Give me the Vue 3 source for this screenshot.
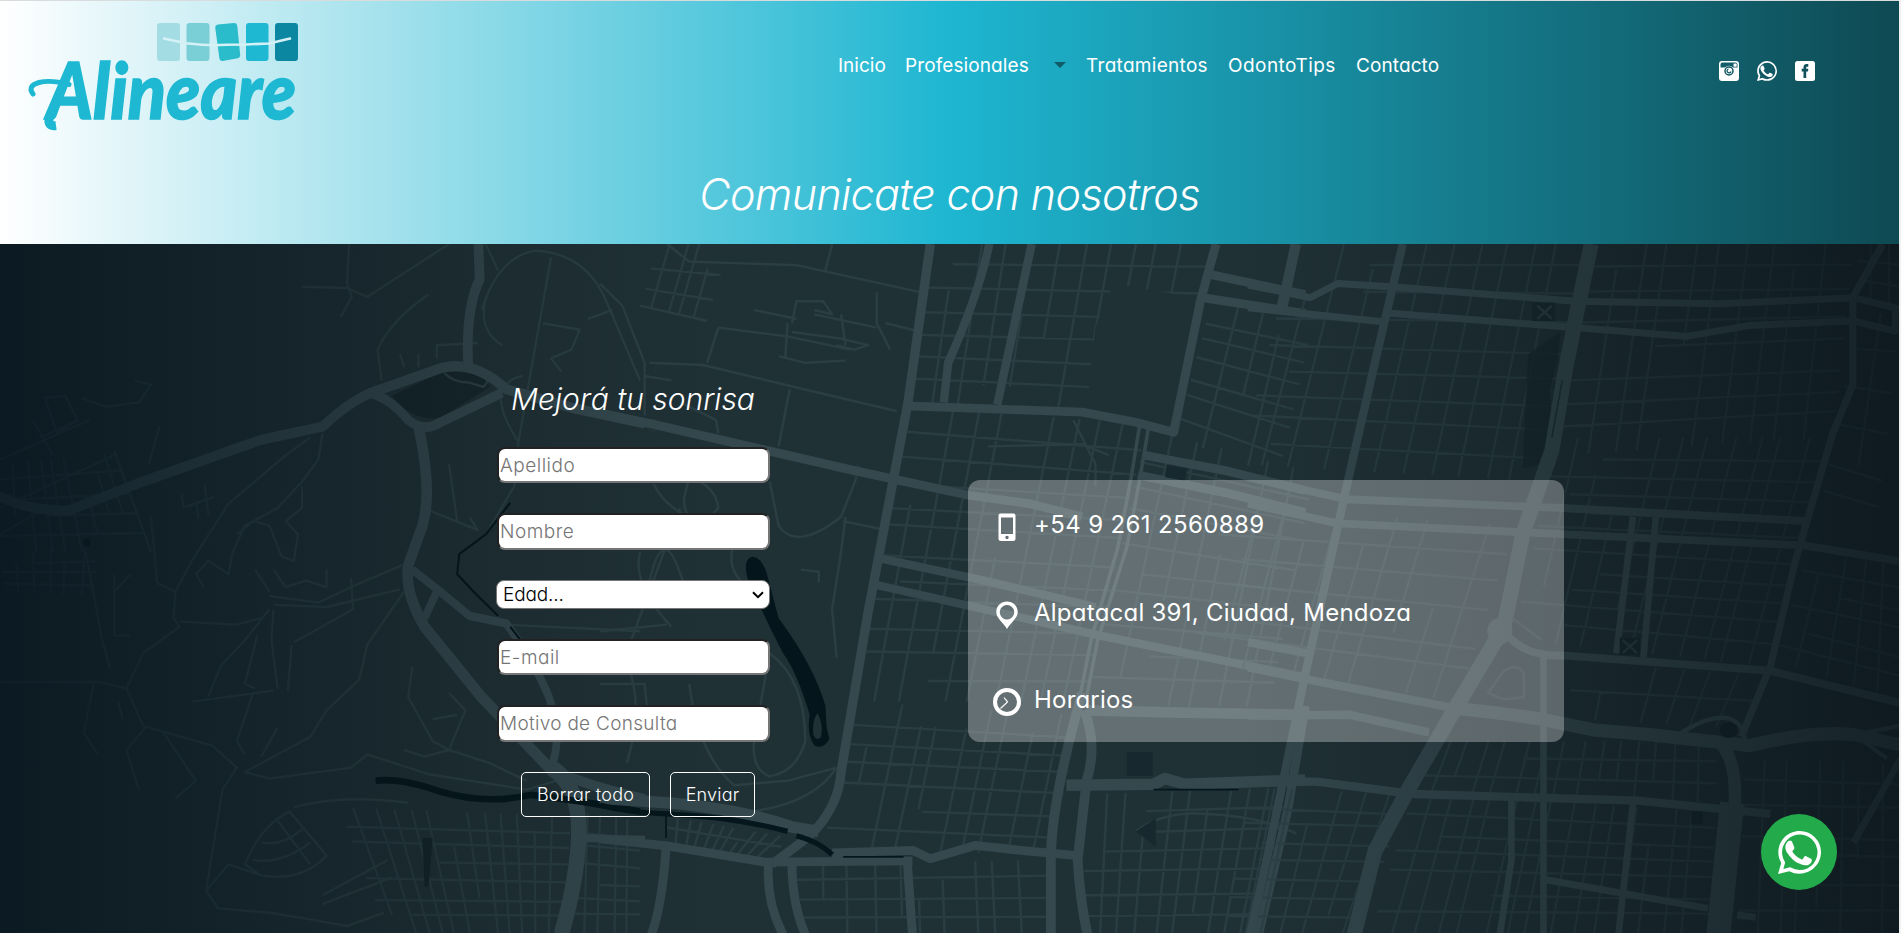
<script setup>
const links = [
  { label: 'Inicio', cls: 'l-inicio' },
  { label: 'Profesionales', cls: 'l-prof', caret: true },
  { label: 'Tratamientos', cls: 'l-trat' },
  { label: 'OdontoTips', cls: 'l-odon' },
  { label: 'Contacto', cls: 'l-cont' },
]

// Street blocks: bilinear grid of slightly irregular lines inside a quad.
let seed = 7
const rnd = () => {
  seed = (seed * 16807) % 2147483647
  return seed / 2147483647
}
function grid(q, nu, nv) {
  const at = (u, v) =>
    [0, 1]
      .map((k) => (1 - v) * ((1 - u) * q[0][k] + u * q[1][k]) + v * ((1 - u) * q[3][k] + u * q[2][k]))
      .map((n) => n.toFixed(1))
      .join(' ')
  let d = ''
  for (let i = 1; i < nu; i++) {
    const u = (i + (rnd() - 0.5) * 0.4) / nu
    const a = rnd() < 0.3 ? Math.round(rnd() * nv * 0.5) / nv : 0
    const b = rnd() < 0.3 ? 1 - Math.round(rnd() * nv * 0.5) / nv : 1
    d += `M${at(u, a)}L${at(u, b)}`
  }
  for (let j = 1; j < nv; j++) {
    const v = (j + (rnd() - 0.5) * 0.4) / nv
    const a = rnd() < 0.3 ? Math.round(rnd() * nu * 0.4) / nu : 0
    d += `M${at(a, v)}L${at(1, v + (rnd() - 0.5) * 0.02)}`
  }
  return d
}

const westStreets =
  grid([[830, 1280], [1400, 1300], [1380, 1566], [950, 1566]], 13, 7) +
  grid([[1410, 1290], [1568, 1310], [1568, 1566], [1400, 1566]], 5, 7) +
  grid([[0, 500], [285, 475], [370, 700], [0, 700]], 9, 5) +
  grid([[425, 575], [520, 540], [530, 610], [435, 640]], 4, 2) +
  grid([[0, 700], [240, 690], [230, 800], [10, 790]], 6, 4)
const midStreets =
  grid([[740, 0], [1370, 0], [1290, 400], [690, 365]], 11, 7) +
  grid([[690, 365], [1225, 410], [1090, 1040], [570, 1040]], 10, 12) +
  grid([[570, 1040], [1075, 1070], [1010, 1390], [500, 1370]], 10, 7) +
  grid([[440, 1410], [1000, 1400], [1010, 1566], [440, 1566]], 10, 4) +
  grid([[150, 1300], [430, 1350], [370, 1400], [150, 1365]], 11, 2) +
  grid([[1225, 420], [1600, 520], [1500, 1050], [1090, 1050]], 7, 10) +
  grid([[1090, 1250], [1550, 1235], [1480, 1566], [1080, 1566]], 10, 7) +
  grid([[1370, 130], [1600, 170], [1520, 530], [1290, 440]], 4, 7) +
  grid([[130, 0], [290, 0], [240, 175], [90, 140]], 5, 3)
const eastStreets =
  grid([[110, 0], [810, 0], [700, 540], [-30, 500]], 11, 9) +
  grid([[820, 0], [1450, 0], [1400, 440], [740, 480]], 10, 8) +
  grid([[740, 440], [1400, 440], [1250, 960], [630, 900]], 11, 11) +
  grid([[-60, 600], [640, 640], [500, 1040], [-150, 950]], 10, 6) +
  grid([[0, 1235], [380, 1250], [260, 1566], [-60, 1566]], 7, 8) +
  grid([[390, 1250], [1120, 1290], [1100, 1566], [290, 1566]], 15, 7) +
  grid([[1190, 1170], [1563, 1180], [1563, 1566], [1170, 1566]], 8, 7) +
  grid([[1340, 700], [1563, 730], [1563, 1030], [1260, 950]], 5, 6) +
  grid([[1460, 160], [1563, 160], [1500, 700], [1360, 650]], 2, 6) +
  grid([[1460, 0], [1563, 0], [1563, 140], [1460, 120]], 3, 3) +
  grid([[440, 1130], [1120, 1130], [1120, 1270], [390, 1245]], 15, 3) +
  grid([[780, 950], [1240, 980], [1180, 1100], [760, 1080]], 7, 2)
const wa =
  'M20.5 3.5A11.8 11.8 0 0 0 12.1 0C5.5 0 .2 5.3.2 11.9c0 2.1.5 4.1 1.6 5.9L0 24l6.3-1.6a11.9 11.9 0 0 0 5.7 1.4C18.600 23.800 24 18.500 24 11.900a11.800 11.800 0 0 0-3.500-8.400zM12.100 21.800a9.900 9.900 0 0 1-5-1.400l-.4-.2-3.700 1 1-3.600-.2-.4a9.900 9.900 0 1 1 8.300 4.600z'
const handset =
  'M7.900 6.100c-.3-.6-.5-.6-.8-.6h-.7c-.3 0-.700.100-1 .5-.300.400-1.300 1.200-1.300 3s1.300 3.500 1.500 3.700c.200.300 2.500 4 6.200 5.500 3.100 1.200 3.700 1 4.400.9.700-.1 2.100-.9 2.400-1.700.300-.8.300-1.600.2-1.700-.1-.2-.3-.3-.7-.4l-2.400-1.200c-.4-.1-.6-.2-.9.2l-1.100 1.400c-.2.200-.4.300-.8.100-.3-.2-1.500-.6-2.800-1.800-1-.9-1.800-2.100-2-2.400-.2-.4 0-.6.200-.7l.5-.6.300-.6c.1-.2 0-.5 0-.6z'
</script>

<template>
  <div class="page">
    <header class="top">
      <div class="bar">
        <svg class="logo" viewBox="0 0 290 120" width="290" height="120">
          <g class="tiles">
            <rect x="137" y="8" width="23" height="38" rx="3" fill="#a4dce3" />
            <rect x="166.500" y="8" width="23" height="38" rx="3" fill="#7acfd6" />
            <path d="M198 9.500l16-1.500q3 0 3.300 3l2.900 29q.2 2.500-2.500 3.200l-15 2.800q-3 .3-3.300-2.700l-4.100-30q-.3-3.300 2.700-3.800z" fill="#2abccb" />
            <rect x="226" y="8" width="22.500" height="38" rx="3" fill="#1eb8d2" />
            <rect x="255" y="8" width="23" height="38" rx="3" fill="#0b87a2" />
          </g>
          <path d="M144 23.500L166 28.300Q190 31 206 29.800L226 29.500L249 28.500L270 23.500" fill="none" stroke="#d4f1f6" stroke-width="2.600" stroke-linecap="round" stroke-linejoin="round" />
          <text x="27" y="103.500" class="word" textLength="249" lengthAdjust="spacingAndGlyphs">Alineare</text>
          <path d="M13 79q-6-8 6-11.500 12-3 30 2" fill="none" stroke="#1eb8d2" stroke-width="5" stroke-linecap="round" />
          <path d="M31 98q-6 14 5 12.500" fill="none" stroke="#1eb8d2" stroke-width="9" />
        </svg>
        <nav class="nav">
          <a v-for="l in links" :key="l.label" :class="l.cls"><span>{{ l.label }}</span><i v-if="l.caret" class="caret"></i></a>
        </nav>
        <div class="social">
          <svg viewBox="0 0 20 20" width="20" height="20">
            <path fill="#fff" fill-rule="evenodd" d="M3 0h14a3 3 0 0 1 3 3v14a3 3 0 0 1-3 3H3a3 3 0 0 1-3-3V3a3 3 0 0 1 3-3zM1.500 6.500H6A5.600 5.600 0 0 1 14 6.500h4.500V3.500A2 2 0 0 0 16.500 1.500H3.500A2 2 0 0 0 1.500 3.500z" />
            <rect x="14.500" y="2.500" width="3.200" height="3.200" rx=".6" fill="#fff" />
            <circle cx="10" cy="10" r="4.600" fill="#fff" />
            <circle cx="10" cy="10" r="4" fill="#fff" stroke="#0f5661" stroke-width="1.500" />
            <path d="M9.500 8A2 2 0 1 0 12 10.500" fill="none" stroke="#0f5661" stroke-width="1.300" />
          </svg>
          <svg viewBox="0 0 24 24" width="20" height="20" fill="#fff"><path :d="wa" fill-rule="evenodd" /><path :d="handset" /></svg>
          <svg viewBox="0 0 20 20" width="20" height="20">
            <rect width="20" height="20" rx="2.500" fill="#fff" />
            <path fill="#0f515c" d="M8.500 17v-6.600H6.700V7.700h1.800V6.200C8.500 4.100 9.700 3 11.700 3h1.600v2.700h-1.100c-.8 0-1 .4-1 1v1h2.100l-.3 2.700h-1.800V17z" />
          </svg>
        </div>
      </div>
      <h1>Comunicate con nosotros</h1>
    </header>

    <main class="contact">
      <svg class="map" viewBox="0 0 1899 689" width="1899" height="689" preserveAspectRatio="none">
        <defs>
          <linearGradient id="shade" x1="0" x2="1" y1="0" y2="0">
            <stop offset="0" stop-color="#03101a" stop-opacity=".7" />
            <stop offset=".12" stop-color="#04101a" stop-opacity=".44" />
            <stop offset=".25" stop-color="#040d13" stop-opacity=".17" />
            <stop offset=".38" stop-color="#040d13" stop-opacity="0" />
            <stop offset=".65" stop-color="#040d13" stop-opacity="0" />
            <stop offset=".85" stop-color="#040d13" stop-opacity=".35" />
            <stop offset="1" stop-color="#040d13" stop-opacity=".63" />
          </linearGradient>
        </defs>
        <rect width="1899" height="689" fill="#203136" />
        <g class="soft">
        <!-- west: hills and ring road -->
        <g transform="scale(.4082 .44)">
          <path class="street" :d="westStreets" />
          <path class="lane" d="M740 97L850 100L900 120L1100 0M855 0L850 90L862 120L835 165M1050 115Q960 170 925 240L935 310M1070 260V230L1170 225M980 250L990 280M1025 250V280M1180 150Q1220 30 1310 15Q1440 20 1490 140L1568 310M1350 30L1270 450L1260 550L1190 660M1220 60L1190 0M1330 180L1420 195L1400 240L1350 260L1375 290M1440 170L1500 150M1200 100Q1160 190 1230 230" />
          <path class="lane" d="M760 440L700 480L560 590L470 720L430 790L425 850L440 870L350 930L310 1010L350 1095L520 1140L580 1190L545 1240L505 1470L535 1510L660 1520L760 1535L850 1550L940 1520M790 430L780 490L740 540L680 600L600 640L570 700L560 750L510 720L480 750L500 780M740 550L740 600L700 630L730 660L720 720L690 710L660 640L620 630L580 660M625 740L660 790M670 740L700 780L750 765L800 780V740M660 800L780 815L860 780L985 730M670 820L800 825L980 785M660 830L600 900L540 960L510 1030M670 830L665 900L680 1010M715 910L705 1015M470 1040L670 1015M860 760L865 830L720 905M630 890L600 1000L625 1010M440 858L580 865L640 850" />
          <path class="lane" d="M0 995L240 995L310 1010M270 965L250 900L210 700M320 750L280 790M365 500L390 415M370 620L385 770L430 790M990 790L900 910L880 990L800 1060L760 1120L700 1150L600 1200L660 1215L860 1190L900 1160L1050 1205L1290 1240L1380 1215M680 1100L640 1165M620 1020L580 1130L600 1160M355 1100L310 1150L340 1240M400 1110L480 1220L430 1260M230 1000L205 1110L240 1160M290 1040L300 1080M1050 605L1170 650L1150 620M1100 500L1120 630M1010 960L1000 1030L1060 1130L1100 1150L1140 1060L1100 1020M1100 1150L1200 1180L1290 1220M990 1150L1040 1165L1100 1150M1240 865L1568 880M1120 1070L1060 1080" />
          <path class="lane" d="M600 1410Q640 1320 710 1290L800 1390Q740 1450 640 1435ZM620 1400Q690 1410 760 1360M640 1360Q690 1370 740 1330M680 1310L760 1410M720 1280Q840 1250 1000 1270M790 1480L950 1400M790 1500L960 1440M505 1470L560 1410L640 1435M280 470L370 700M110 350L160 345L190 400L140 430ZM200 350L260 370L340 360L370 320L330 310M80 400L130 480M100 440L190 400M0 490L220 400M0 600L280 480M0 660L110 600M280 750V890H320M1280 300Q1180 320 1270 450" />
          <path d="M960 345L1085 290Q1190 290 1200 325L1080 395Q1010 405 960 345z" fill="#17272c" />
          <path d="M1088 293Q1110 315 1150 315L1185 325L1200 305" class="lane" />
          <g class="road">
            <path stroke-width="23" d="M-10 570Q80 610 170 605L350 540L640 445L790 415Q870 345 940 328L1080 282Q1160 262 1240 330L1400 372L1580 408" />
            <path stroke-width="24" d="M1172 0L1175 80Q1140 150 1147 275" />
            <path stroke-width="22" d="M900 338Q950 345 1000 400Q1040 430 1080 405L1230 338" />
            <path stroke-width="26" d="M1025 415Q1060 560 1035 640L1000 730Q990 790 1040 870L1180 1030L1350 1195" />
            <path stroke-width="19" d="M1010 740Q1080 790 1150 845L1240 862Q1310 950 1345 1030Q1380 1120 1350 1190M1040 850L1070 790" />
            <path stroke-width="38" d="M1350 1190Q1420 1230 1418 1340Q1415 1440 1375 1570" />
            <path stroke-width="23" d="M1350 1195Q1450 1235 1580 1262" />
            <path stroke-width="18" d="M1415 1350L1580 1354" />
          </g>
          <path class="water" stroke-width="15" d="M920 1220Q980 1212 1080 1245Q1190 1275 1300 1252Q1400 1262 1568 1290" />
          <path class="water" stroke-width="5" d="M1250 588L1190 660L1125 705L1120 750L1160 790L1220 845M1250 870L1275 900" />
          <circle cx="213" cy="678" r="9" fill="#122127" />
          <path d="M1035 1350h25l-10 110h-10z" fill="#14252a" />
        </g>
        <!-- centre: city grid and park lake -->
        <g transform="translate(600) scale(.4464 .44)">
          <path class="street" :d="midStreets" />
          <path fill="#203136" d="M1150 90L1350 125L1285 415L1090 375L1110 190z" />
          <path class="lane" d="M150 0L200 40L440 48L720 110M520 0L505 60M0 90L50 140L100 270V390M90 140L240 175M110 270L230 275L665 380M265 190L240 270M265 190L420 210L560 240M345 150L440 170M430 180L440 130L500 130L520 160L480 150M430 200L540 215L600 230L570 240L530 230M540 160L550 230M420 180L415 260M400 255L460 270L550 265M425 330L400 460M620 110V180L650 240M640 180L720 200M480 160L620 190M100 300L160 310M180 360L260 400L265 430" />
          <path class="lane" d="M200 530Q260 550 265 600L230 640Q180 620 190 570ZM120 545Q140 590 190 615M380 540L400 640Q440 700 540 620L575 530M550 620L540 700L520 830L530 940M545 630L640 650M450 740L490 745V770M90 700Q70 770 160 870M110 770Q140 630 180 750L200 800M300 680Q280 740 330 780M0 880L150 865M180 600L70 900M380 930Q460 990 460 1130Q440 1200 380 1210Q330 1190 350 1100L375 960M0 1000L100 1000L110 1100M200 1000Q220 1160 300 1230L420 1220L530 1190M530 1190Q480 1270 340 1290M60 950Q100 1050 60 1180" />
          <path class="lane" d="M1200 1335Q1260 1290 1350 1295Q1480 1300 1560 1340M870 460L1080 455L1140 480M1060 400L1110 500V550" />
          <g class="road">
            <path stroke-width="21" d="M740 0L690 360L645 600L600 840L540 1200Q535 1280 470 1345L385 1410" />
            <path stroke-width="19" d="M872 0Q850 110 780 270L770 360M967 0L890 365" />
            <path stroke-width="20" d="M685 368L1080 382L1200 405L1285 428L1345 130L1380 0" />
            <path stroke-width="20" d="M-10 382L120 410L570 515L820 570L960 590L1080 620" />
            <path stroke-width="19" d="M630 715L860 765L1110 825M620 775L860 830L1120 890L1580 985" />
            <path stroke-width="8" d="M1210 405L1190 530L1160 690L1100 900L1075 1030M1230 410L1210 530L1180 690L1115 900L1090 1030" />
            <path stroke-width="22" d="M1080 1020Q1010 1270 1010 1400V1570" />
            <path stroke-width="22" d="M1085 1060Q1115 1140 1090 1220L1070 1400Q1075 1490 1092 1570" />
            <path stroke-width="20" d="M1220 480L1400 515L1580 560M1205 525L1400 565L1580 610M1370 70L1580 115M1350 122L1580 158M1560 0L1525 145" />
            <path stroke-width="26" d="M1045 1230L1240 1228L1265 1215L1310 1228L1580 1218" />
            <path stroke-width="20" d="M0 1352L150 1368L370 1405L700 1402M520 1384L700 1378L740 1397L840 1367L960 1380L1070 1390" />
            <path stroke-width="20" d="M378 1405Q370 1490 410 1570M430 1405Q430 1500 460 1570M688 1400L700 1570M148 1370Q140 1500 115 1570" />
            <path stroke-width="26" d="M0 1260L150 1270Q320 1285 430 1325L490 1335" />
            <path stroke-width="20" d="M1580 1050L1540 1290L1475 1570" />
            <path stroke-width="24" d="M1090 1060L1300 1065L1580 1070" />
            <circle cx="575" cy="516" r="12" /><circle cx="118" cy="412" r="13" />
          </g>
          <path class="lake" d="M342 711Q362 712 374 750L400 850Q480 960 505 1050L508 1100L514 1125Q500 1150 480 1140Q462 1110 470 1070Q440 970 410 930L380 870L332 765Q318 715 342 711z" />
          <path fill="#203136" d="M487 1066q14 25 8 55q-10 10-17-5q-4-30 9-50z" />
          <path class="water" stroke-width="12" d="M0 1275Q60 1292 150 1295Q300 1302 420 1335M440 1345Q490 1358 520 1388" />
          <path class="water" stroke-width="4" d="M148 1300V1350M545 1393H680M1240 1240H1430" />
          <path fill="#17292e" d="M1180 1155h58v54h-58zM1270 502l46 8-6 28-44-8zM1200 1335l45-30v65z" />
        </g>
        <!-- east: avenues and highway -->
        <g transform="translate(1250) scale(.4163 .44)">
          <path class="street" :d="eastStreets" />
          <path fill="#18292e" d="M745 200L668 250L655 510L700 500L725 400L720 330L740 260z" opacity=".8" />
          <g class="road">
            <path stroke-width="16" d="M-5 93L145 122L210 90L350 98L780 130L1130 136L1450 122L1570 150M-5 145L330 178M330 157L780 190L1050 210L1200 185L1450 175L1550 198V150" />
            <path stroke-width="25" d="M110 0L75 155" />
            <path stroke-width="20" d="M367 0L300 270L230 560L130 990L40 1400L0 1570" />
            <path stroke-width="36" d="M820 0Q785 150 755 300L725 470L655 660L610 870L490 1060L380 1240L300 1380L250 1570" />
            <path stroke-width="18" d="M-5 530L230 580L750 600L1340 630M-5 590L210 635L760 660L1330 685L1570 722" />
            <path stroke-width="17" d="M1520 0L1448 122L1448 320L1400 430L1310 720L1250 960L1180 1120" />
            <path stroke-width="18" d="M610 880Q660 940 750 935L1250 970L1570 1045" />
            <path stroke-width="30" d="M490 1055Q600 1065 700 1080L830 1105L960 1115L1200 1140Q1350 1105 1450 1115L1570 1140" />
            <path stroke-width="10" d="M1030 1115Q1100 1070 1150 1078Q1190 1090 1190 1140M1460 1120L1530 1170M1480 1110L1563 1095" />
            <path stroke-width="30" d="M1130 1135Q1175 1180 1162 1300" />
            <path stroke-width="58" d="M1158 1270L1125 1570" />
            <path stroke-width="19" d="M-5 1222L160 1222L390 1250L930 1265L1250 1295M-5 1072L240 1070L430 1110M-5 905L150 932M-5 962L140 990L490 1055" />
            <path stroke-width="16" d="M705 935V1570M920 620L880 930M975 620L945 940M920 1270L885 1570M628 1260V1400L600 1570M710 1445L1100 1510M1563 1170L1450 1360M1170 1525L1215 1530" />
            <circle cx="600" cy="880" r="20" stroke-width="20" />
          </g>
          <path d="M750 310L725 440" stroke="#203136" stroke-width="4" />
          <ellipse cx="1150" cy="1105" rx="22" ry="18" fill="#17272c" />
          <g fill="#182a2f"><path d="M678 133h54v42h-54zM888 895h48v38h-48zM1060 1290h28v28h-28z" /></g>
          <path class="lane" d="M690 140L725 170M725 140L690 170M895 900L930 930M930 900L895 930M572 1020L610 970Q650 950 658 980V1030L610 1035ZM630 850L700 900" />
        </g>
        </g>
        <rect width="1899" height="689" fill="url(#shade)" />
      </svg>

      <form class="form">
        <h2>Mejorá tu sonrisa</h2>
        <input class="f1" placeholder="Apellido" />
        <input class="f2" placeholder="Nombre" />
        <div class="select">
          <select><option>Edad...</option></select>
          <svg viewBox="0 0 12 8" width="12" height="8"><path d="M1 1.200L6 6.200L11 1.200" fill="none" stroke="#000" stroke-width="2" /></svg>
        </div>
        <input class="f3" placeholder="E-mail" />
        <input class="f4" placeholder="Motivo de Consulta" />
        <div class="buttons">
          <button type="button" class="b1">Borrar todo</button>
          <button type="button" class="b2">Enviar</button>
        </div>
      </form>

      <section class="card">
        <div class="row">
          <svg viewBox="0 0 28 28" width="28" height="28"><path fill="#fff" fill-rule="evenodd" d="M7.500.5h13a2 2 0 0 1 2 2v23a2.500 2.500 0 0 1-2.500 2.500H8a2.500 2.500 0 0 1-2.500-2.500v-23a2 2 0 0 1 2-2zM8 4.500V21h12V4.500zM14 22.700a1.700 1.700 0 1 0 .01 0z" /></svg>
          <span class="t1">+54 9 261 2560889</span>
        </div>
        <div class="row">
          <svg viewBox="0 0 28 28" width="28" height="28"><path fill="#fff" fill-rule="evenodd" d="M14 .5C20 .5 24.700 5 24.700 11c0 6-6 9.500-10.700 17C9.300 20.500 3.300 17 3.300 11 3.300 5 8 .5 14 .5zM14 4a7.200 7.200 0 1 0 .01 0z" /></svg>
          <span class="t2">Alpatacal 391, Ciudad, Mendoza</span>
        </div>
        <div class="row">
          <svg viewBox="0 0 28 28" width="28" height="28"><circle cx="14" cy="14" r="12" fill="none" stroke="#fff" stroke-width="4" /><path d="M11 9.500L14.500 14L7.500 20.500M13 11.500L14.500 14" fill="none" stroke="#fff" stroke-width="1.200" /></svg>
          <span class="t3">Horarios</span>
        </div>
      </section>

      <a class="fab"><svg viewBox="0 0 24 24" width="43" height="43" fill="#fff"><path :d="wa" fill-rule="evenodd" /><path :d="handset" /></svg></a>
    </main>
  </div>
</template>

<style>
body { background: #f1f1f1; overflow: hidden; }
</style>

<style scoped>
* { box-sizing: border-box; }
.page {
  width: 1899px;
  height: 933px;
  border-top: 1px solid #d9dcdd;
  color: #fff;
  font-family: Inter, Lato, sans-serif;
  font-feature-settings: 'cv11';
  overflow: hidden;
}
.top { height: 243px; background: linear-gradient(90deg, #fff, #1eb6d1 50%, #0e4a53); }
.bar { display: flex; align-items: flex-start; height: 163px; padding: 14px 84px 0 20px; }
.logo { flex: none; overflow: visible; }
.word { font: italic 900 78px Lato, sans-serif; fill: #1eb8d2; stroke: #1eb8d2; stroke-width: 1.500; }
.nav { display: flex; margin: 39px 0 0 528px; font-size: 19px; line-height: 24px; font-weight: 400; white-space: nowrap; }
.nav a { display: flex; align-items: center; flex: none; }
.l-inicio { width: 67px; }
.l-prof { width: 181px; letter-spacing: .1px; }
.l-prof span { width: 149px; }
.l-trat { width: 142px; letter-spacing: .3px; }
.l-odon { width: 128px; letter-spacing: .45px; }
.l-cont { width: 84px; letter-spacing: .1px; }
.caret { border: 6px solid transparent; border-top-color: #0f5b67; border-bottom: 0; margin-top: -2px; }
.social { display: flex; gap: 18px; margin: 46px 0 0 auto; }
h1 { margin: 0; text-align: center; font-size: 43px; line-height: 60px; font-weight: 300; font-style: italic; letter-spacing: -.63px; }
.contact { position: relative; height: 689px; display: flex; }
.map { position: absolute; inset: 0; }
.soft { filter: blur(.5px); }
.street { fill: none; stroke: #2c3f44; stroke-width: 5.500; opacity: .85; }
.lane { fill: none; stroke: #2b3f43; stroke-width: 5.500; stroke-linejoin: round; }
.road { fill: none; stroke: #34484d; stroke-linejoin: round; }
.water { fill: none; stroke: #05171c; }
.lake { fill: #04161b; }
.form { position: relative; margin: 135px 0 0 496px; width: 274px; display: flex; flex-direction: column; }
h2 { margin: 0 0 28px; text-align: center; font-size: 30px; line-height: 40px; font-weight: 300; font-style: italic; white-space: nowrap; }
input, select, button { font-family: inherit; font-feature-settings: inherit; font-size: 19px; font-weight: 300; }
input {
  width: 273px; height: 36px; margin: 0 0 30px 1px; padding: 0 1px;
  border: 2px solid #767676; border-color: #222 #767676 #767676 #222; border-radius: 8px; background: #fff;
  letter-spacing: .5px;
}
input::placeholder { color: #757575; opacity: 1; }
.f2, .f4 { height: 37px; }
.f3 { margin-top: 30px; }
.f4 { letter-spacing: .3px; }
.select { position: relative; height: 29px; }
select { appearance: none; width: 274px; height: 29px; padding: 0 5px 0 6px; border: 1px solid #767676; border-radius: 8px; background: #fff; color: #000; display: block; letter-spacing: -.15px; }
.select svg { position: absolute; right: 6px; top: 11px; }
.buttons { display: flex; gap: 20px; margin-left: 25px; }
button { height: 45px; padding: 0; border: 1px solid #fff; border-radius: 5px; background: none; color: #fff; font-size: 18px; letter-spacing: .2px; }
.b1 { width: 129px; }
.b2 { width: 85px; }
.card { position: relative; width: 596px; height: 262px; margin: 236px 0 0 198px; padding: 33px 24px 0 25px; border-radius: 12px; background: rgba(255, 255, 255, .3); display: flex; flex-direction: column; gap: 59.500px; }
.row { display: flex; gap: 13px; height: 28px; font-size: 24px; line-height: 24px; white-space: nowrap; }
.t1 { letter-spacing: .37px; }
.t2 { letter-spacing: .25px; }
.t3 { letter-spacing: .2px; }
.fab { position: absolute; right: 62px; bottom: 43px; width: 76px; height: 76px; border-radius: 50%; background: #23ab4b; display: flex; align-items: center; justify-content: center; }
</style>
